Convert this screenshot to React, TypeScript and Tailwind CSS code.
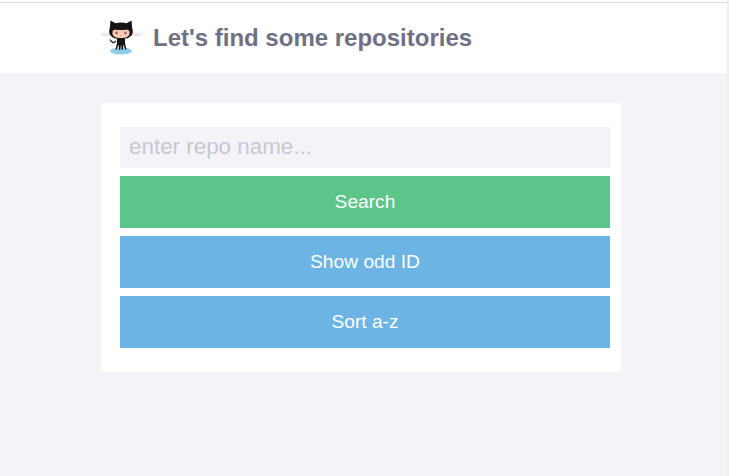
import React from 'react';

function Octocat() {
  return (
    <svg width="40" height="40" viewBox="0 0 40 40" className="shrink-0 mb-[2px]">
      {/* whiskers */}
      <path d="M0 16.500h10M0 18.500h9M30 16.500h10M31 18.500h9" stroke="#e6e6e6" strokeWidth="1.500" />
      {/* water */}
      <ellipse cx="20" cy="34" rx="11" ry="3.500" fill="#8fcdec" />
      {/* tail */}
      <path d="M15 24c-2 2.500-4 2-6-1.500" stroke="#222" strokeWidth="1.300" fill="none" />
      {/* legs and body */}
      <path d="M16 20h8v6l1.500 6.500h-1.200l-1.800-5-.6 5.500h-1.100l-.8-5.500-.8 5.500h-1.100l-.6-5.500-1.800 5h-1.200L16 26z" fill="#151515" />
      {/* head */}
      <path d="M9.500 3.500l5 2.700c3.500-.9 7.500-.9 11 0l5-2.700.7 7.500c2 6-.7 11-11.200 11S6.800 17 8.800 11z" fill="#151515" />
      {/* face */}
      <path d="M11.500 15c0-3.500 5-2 8.500-2s8.500-1.500 8.500 2c.5 4-2.500 6-8.500 6s-9-2-8.500-6z" fill="#f5cdb9" />
      <circle cx="15.500" cy="16" r="1.400" fill="#a9695a" />
      <circle cx="24.500" cy="16" r="1.400" fill="#a9695a" />
      <path d="M19 18.500h2l-1 1z" fill="#a9695a" />
    </svg>
  );
}

export default function App() {
  return (
    <div className="h-[476px] overflow-hidden bg-[#f3f3f8] font-['Liberation_Sans',Arial,sans-serif] border-r-2 border-r-[#eeeeef]">
      <div className="h-[2px] bg-white" />
      <header className="h-[71px] bg-white border-t border-[#dcdcdc] pl-[101px] flex items-center gap-3">
        <Octocat />
        <h1 className="text-2xl font-bold text-[#6f6f85]">Let's find some repositories</h1>
      </header>
      <div className="pt-[30px] pl-[101px]">
        <div className="w-[520px] bg-white pt-6 pb-6 pl-[19px] pr-[11px] flex flex-col gap-2">
          <input
            placeholder="enter repo name..."
            className="h-[41px] w-full bg-[#f3f3f8] px-[9px] pb-[2px] text-[22.4px] text-[#6f6f85] outline-none placeholder:text-[#c8c8d0]"
          />
          <button className="h-[52px] bg-[#5cc589] text-white text-[19.2px]">Search</button>
          <button className="h-[52px] bg-[#6cb4e4] text-white text-[19.2px]">Show odd ID</button>
          <button className="h-[52px] bg-[#6cb4e4] text-white text-[19.2px]">Sort a-z</button>
        </div>
      </div>
    </div>
  );
}
